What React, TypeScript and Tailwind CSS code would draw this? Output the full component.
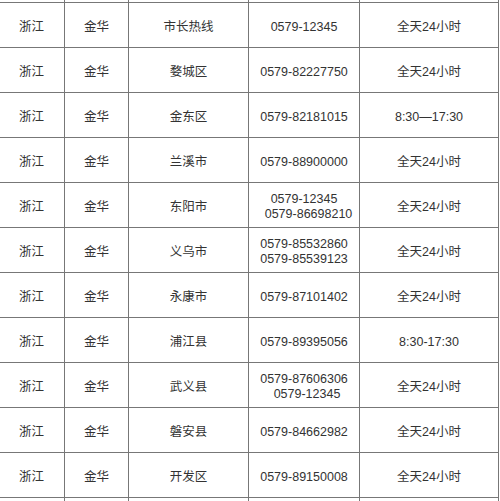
import React from 'react';

type Row = {
  prov: string;
  city: string;
  area: string;
  phones: { text: string; shift?: string }[];
  hours: string;
};

const rows: Row[] = [
  { prov: '浙江', city: '金华', area: '市长热线', phones: [{ text: '0579-12345' }], hours: '全天24小时' },
  { prov: '浙江', city: '金华', area: '婺城区', phones: [{ text: '0579-82227750' }], hours: '全天24小时' },
  { prov: '浙江', city: '金华', area: '金东区', phones: [{ text: '0579-82181015' }], hours: '8:30—17:30' },
  { prov: '浙江', city: '金华', area: '兰溪市', phones: [{ text: '0579-88900000' }], hours: '全天24小时' },
  {
    prov: '浙江',
    city: '金华',
    area: '东阳市',
    phones: [{ text: '0579-12345' }, { text: '0579-86698210', shift: 'pl-[9px]' }],
    hours: '全天24小时',
  },
  {
    prov: '浙江',
    city: '金华',
    area: '义乌市',
    phones: [{ text: '0579-85532860' }, { text: '0579-85539123' }],
    hours: '全天24小时',
  },
  { prov: '浙江', city: '金华', area: '永康市', phones: [{ text: '0579-87101402' }], hours: '全天24小时' },
  { prov: '浙江', city: '金华', area: '浦江县', phones: [{ text: '0579-89395056' }], hours: '8:30-17:30' },
  {
    prov: '浙江',
    city: '金华',
    area: '武义县',
    phones: [{ text: '0579-87606306' }, { text: '0579-12345', shift: 'pl-[6px]' }],
    hours: '全天24小时',
  },
  { prov: '浙江', city: '金华', area: '磐安县', phones: [{ text: '0579-84662982' }], hours: '全天24小时' },
  { prov: '浙江', city: '金华', area: '开发区', phones: [{ text: '0579-89150008' }], hours: '全天24小时' },
];

const cell = 'flex flex-col items-center justify-center h-[45px] border-r border-b border-[#777] pt-[4px]';

const App: React.FC = () => {
  return (
    <div className="h-[501px] w-[500px] overflow-hidden bg-white">
      <div
        className="ml-[-2px] mt-[-42px] w-max border-l border-[#777] text-[12.5px] leading-[15px] text-[#333]"
        style={{ fontFamily: '"Liberation Sans", "Noto Sans CJK SC", sans-serif' }}
      >
        {/* row cut off above the viewport */}
        <div className="grid grid-cols-[66px_64px_120px_111px_139px]">
          <div className={cell} />
          <div className={cell} />
          <div className={cell} />
          <div className={cell} />
          <div className={cell} />
        </div>

        {rows.map((r, i) => (
          <div key={i} className="grid grid-cols-[66px_64px_120px_111px_139px]">
            <div className={cell}>{r.prov}</div>
            <div className={cell}>{r.city}</div>
            <div className={cell}>{r.area}</div>
            <div className={cell}>
              {r.phones.map((p, j) => (
                <span key={j} className={p.shift}>
                  {p.text}
                </span>
              ))}
            </div>
            <div className={cell}>{r.hours}</div>
          </div>
        ))}

        {/* row running past the bottom edge */}
        <div className="grid grid-cols-[66px_64px_120px_111px_139px]">
          <div className={cell} />
          <div className={cell} />
          <div className={cell} />
          <div className={cell} />
          <div className={cell} />
        </div>
      </div>
    </div>
  );
};

export default App;
